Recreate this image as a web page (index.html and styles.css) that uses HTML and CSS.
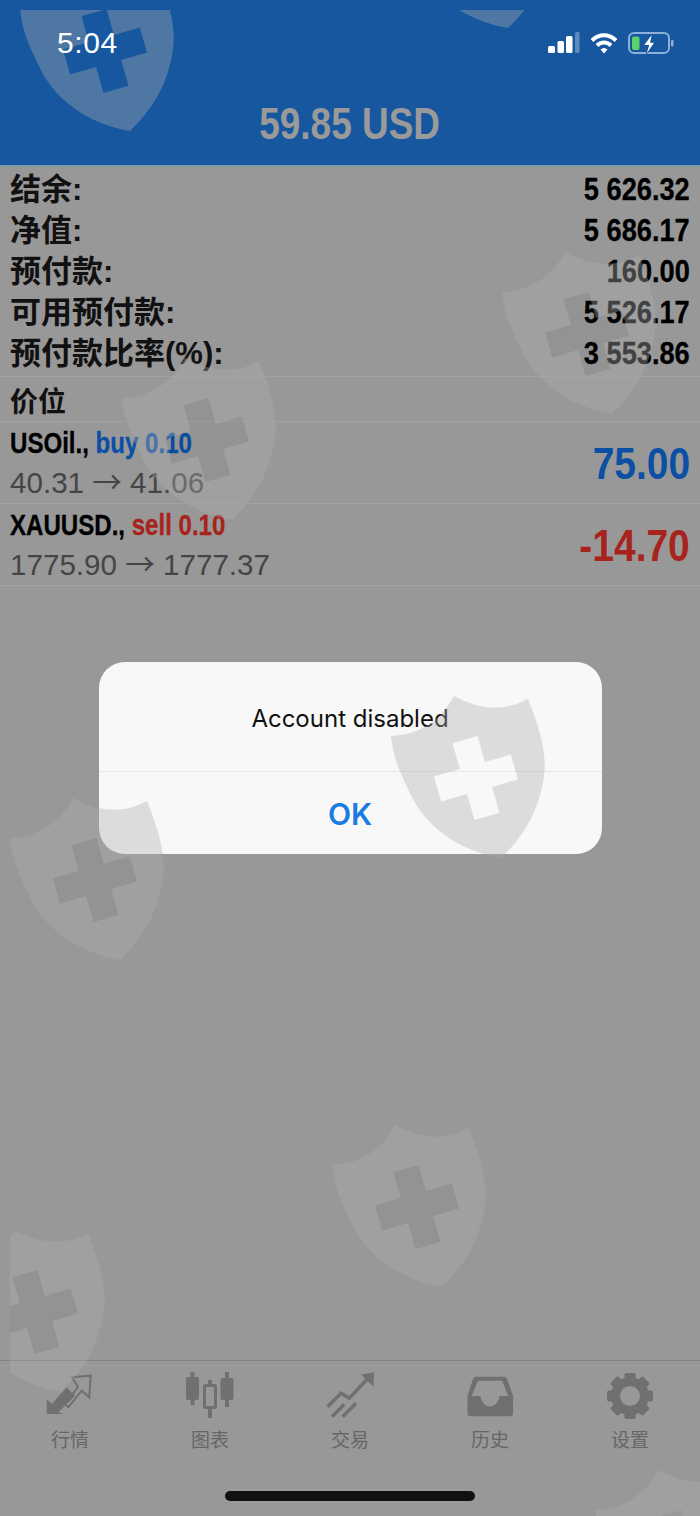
FILE: index.html
```html
<!DOCTYPE html>
<html lang="zh">
<head>
    <meta charset="UTF-8">
    <meta name="viewport" content="width=device-width, initial-scale=1.0">
    <title>Account disabled</title>
    <link rel="stylesheet" href="styles.css">
</head>
<body>
    <div class="phone">
        <header class="header">
            <div class="status">
                <span class="time">5:04</span>
                <div class="status-icons">
                    <svg class="ic-signal" width="32" height="22" viewBox="0 0 32 22">
                        <rect x="0" y="14" width="7" height="7" rx="1.5" fill="#fff"/>
                        <rect x="9.5" y="9" width="6.5" height="12" rx="1.5" fill="#fff"/>
                        <rect x="18" y="4" width="6.5" height="17" rx="1.5" fill="#fff"/>
                        <rect x="27" y="0" width="4.5" height="21" rx="1.5" fill="#fff" opacity=".3"/>
                    </svg>
                    <svg class="ic-wifi" width="28" height="22" viewBox="0 0 28 22">
                        <path d="M2 8.5C9 1.5 19 1.5 26 8.5" fill="none" stroke="#fff" stroke-width="4"/>
                        <path d="M7 13.5C11 9.5 17 9.5 21 13.5" fill="none" stroke="#fff" stroke-width="4"/>
                        <path d="M10.5 17.5Q14 14.5 17.5 17.5L14 21.5Z" fill="#fff"/>
                    </svg>
                    <svg class="ic-battery" width="46" height="22" viewBox="0 0 46 22">
                        <rect x="1" y="1" width="40" height="20" rx="5" fill="none" stroke="#8db0d8" stroke-width="2"/>
                        <rect x="4" y="4.5" width="7.5" height="13.5" rx="2" fill="#5ad56c"/>
                        <path d="M23.7 3 16.3 13H21.3L18.7 21.5 26 10.7H22Z" fill="#fff" stroke="#17579f" stroke-width="1.5" paint-order="stroke"/>
                        <rect x="43" y="8" width="2.5" height="6.5" rx="1" fill="#8db0d8"/>
                    </svg>
                </div>
            </div>
            <div class="balance"><span class="narrow">59.85 USD</span></div>
        </header>

        <main class="content">
            <section class="summary">
                <div class="sum-row"><span class="sum-label">结余:</span><span class="sum-value">5 626.32</span></div>
                <div class="sum-row"><span class="sum-label">净值:</span><span class="sum-value">5 686.17</span></div>
                <div class="sum-row"><span class="sum-label">预付款:</span><span class="sum-value">160.00</span></div>
                <div class="sum-row"><span class="sum-label">可用预付款:</span><span class="sum-value">5 526.17</span></div>
                <div class="sum-row"><span class="sum-label">预付款比率(%):</span><span class="sum-value">3 553.86</span></div>
            </section>
            <div class="section-title">价位</div>
            <div class="position">
                <div>
                    <div class="pos-name">USOil., <span class="buy">buy 0.10</span></div>
                    <div class="pos-price">40.31 <span class="arrow">→</span> 41.06</div>
                </div>
                <span class="pos-profit buy">75.00</span>
            </div>
            <div class="position">
                <div>
                    <div class="pos-name">XAUUSD., <span class="sell">sell 0.10</span></div>
                    <div class="pos-price">1775.90 <span class="arrow">→</span> 1777.37</div>
                </div>
                <span class="pos-profit sell">-14.70</span>
            </div>
        </main>

        <nav class="tabs">
            <div class="tab-list">
                <div class="tab">
                    <svg width="48" height="48" viewBox="0 0 48 48">
                        <path d="M26 5.3 44.7 3.7 43.3 25.3 35.7 18.7 22.3 35.3 19 32 32 15Z" fill="none" stroke="#707070" stroke-width="2"/>
                        <path d="M.7 42V27L5.7 32 20.7 15.3 29 23.7 12.3 40.3 17.3 42Z" fill="#707070"/>
                    </svg>
                    <span>行情</span>
                </div>
                <div class="tab">
                    <svg width="48" height="48" viewBox="0 0 48 48">
                        <path d="M6.5 0V33" stroke="#707070" stroke-width="4"/>
                        <rect x="0" y="5" width="13" height="23" rx="2" fill="#707070"/>
                        <path d="M24 8V46" stroke="#707070" stroke-width="4"/>
                        <rect x="18.5" y="13.5" width="11" height="22" rx="1" fill="#989898" stroke="#707070" stroke-width="3"/>
                        <path d="M41 0V35" stroke="#707070" stroke-width="4"/>
                        <rect x="34.5" y="6" width="13" height="22" rx="2" fill="#707070"/>
                    </svg>
                    <span>图表</span>
                </div>
                <div class="tab">
                    <svg width="48" height="48" viewBox="0 0 48 48">
                        <path d="M1.7 34.7 15 21.3 23.3 26.3 45 3" fill="none" stroke="#707070" stroke-width="3.5"/>
                        <path d="M36.7 3 47.3 1.3 46.7 13Z" fill="#707070" stroke="#707070" stroke-width="1.5"/>
                        <path d="M6 44.7 18.3 32.3M16.7 44.7 30 31.3" stroke="#707070" stroke-width="3.5"/>
                    </svg>
                    <span>交易</span>
                </div>
                <div class="tab">
                    <svg width="48" height="48" viewBox="0 0 50 48">
                        <path fill-rule="evenodd" fill="#707070" d="M10 4H40Q42 4 43 7L49 24V42Q49 45 46 45H4Q1.5 45 1.5 42V24L7 7Q8 4 10 4ZM12.5 8H37.5L44 24H35C34 30 30 35 25 35C20 35 16 30 15 24H6Z"/>
                    </svg>
                    <span>历史</span>
                </div>
                <div class="tab">
                    <svg width="48" height="48" viewBox="0 0 48 48">
                        <circle cx="24" cy="24" r="14.5" fill="none" stroke="#707070" stroke-width="9"/>
                        <g fill="#707070">
                            <rect x="18.5" y="1" width="11" height="9" rx="2"/>
                            <rect x="18.5" y="1" width="11" height="9" rx="2" transform="rotate(45 24 24)"/>
                            <rect x="18.5" y="1" width="11" height="9" rx="2" transform="rotate(90 24 24)"/>
                            <rect x="18.5" y="1" width="11" height="9" rx="2" transform="rotate(135 24 24)"/>
                            <rect x="18.5" y="1" width="11" height="9" rx="2" transform="rotate(180 24 24)"/>
                            <rect x="18.5" y="1" width="11" height="9" rx="2" transform="rotate(225 24 24)"/>
                            <rect x="18.5" y="1" width="11" height="9" rx="2" transform="rotate(270 24 24)"/>
                            <rect x="18.5" y="1" width="11" height="9" rx="2" transform="rotate(315 24 24)"/>
                        </g>
                    </svg>
                    <span>设置</span>
                </div>
            </div>
            <div class="home-bar"></div>
        </nav>

        <div class="overlay">
            <div class="dialog">
                <div class="dialog-text">Account disabled</div>
                <div class="dialog-btn">OK</div>
            </div>
        </div>

        <!-- watermark shields, they lie over everything -->
        <svg width="0" height="0" class="defs">
            <defs>
                <path id="shield" fill-rule="evenodd" d="M2 40Q45 38 65 0Q105 22 139 3C152 35 158 60 155 80C150 115 135 140 112 162C70 155 35 130 20 95C10 75 4 60 2 40ZM63.5 47.2 88.5 40 95.9 65.9 121.8 58.5 129 83.5 103.1 90.9 110.5 116.8 85.5 124 78.1 98.1 52.2 105.5 45 80.5 70.9 73.1Z"/>
                <path id="cross" d="M63.5 47.2 88.5 40 95.9 65.9 121.8 58.5 129 83.5 103.1 90.9 110.5 116.8 85.5 124 78.1 98.1 52.2 105.5 45 80.5 70.9 73.1Z"/>
            </defs>
        </svg>
        <div class="watermarks">
            <svg class="wm wm1" viewBox="0 0 156 165"><use href="#shield"/></svg>
            <svg class="wm wm2" viewBox="0 0 156 165"><use href="#shield"/></svg>
            <svg class="wm wm3" viewBox="0 0 156 165"><use href="#shield"/><use href="#cross" class="wm-cross"/></svg>
            <svg class="wm wm4" viewBox="0 0 156 165"><use href="#shield"/><use href="#cross" class="wm-cross"/></svg>
            <svg class="wm wm5" viewBox="0 0 156 165"><use href="#shield"/></svg>
            <svg class="wm wm6" viewBox="0 0 156 165"><use href="#shield"/><use href="#cross" class="wm-cross"/></svg>
            <svg class="wm wm7" viewBox="0 0 156 165"><use href="#shield"/><use href="#cross" class="wm-cross"/></svg>
            <svg class="wm wm8" viewBox="0 0 156 165"><use href="#shield"/><use href="#cross" class="wm-cross"/></svg>
            <svg class="wm wm9" viewBox="0 0 156 165"><use href="#shield"/></svg>
        </div>
    </div>
</body>
</html>
```

FILE: styles.css
```css
* {
    box-sizing: border-box;
}
body {
    margin: 0;
    background: #989898;
    font-family: "Liberation Sans", "Noto Sans CJK SC", sans-serif;
    overflow: hidden;
}
.phone {
    position: relative;
    width: 700px;
    height: 1516px;
    display: flex;
    flex-direction: column;
    overflow: hidden;
}

/* header */
.header {
    height: 165px;
    background: #17579f;
}
.status {
    position: relative;
    z-index: 3;
    height: 86px;
    padding: 0 26px 0 57px;
    display: flex;
    justify-content: space-between;
    align-items: center;
    color: white;
}
.time {
    font-size: 30px;
    letter-spacing: 0.6px;
}
.status-icons {
    display: flex;
    gap: 10px;
    align-items: center;
}
.balance {
    height: 76px;
    line-height: 76px;
    text-align: center;
    font-size: 44px;
    font-weight: bold;
    color: #9a9a9a;
}
.narrow {
    display: inline-block;
    transform: scaleX(0.84);
}

/* account list */
.content {
    flex: 1;
    border-top: 2px solid #7d9aa5;
    background: #989898;
}
.summary {
    padding-top: 2px;
    padding-bottom: 2px;
    border-bottom: 1px solid #a1a1a1;
}
.sum-row {
    height: 41px;
    line-height: 41px;
    padding: 0 10px;
    display: flex;
    justify-content: space-between;
}
.sum-label {
    font-size: 31px;
    font-weight: bold;
    color: #111;
}
.sum-value {
    font-size: 31px;
    font-weight: bold;
    color: #000;
    -webkit-text-stroke: 0.3px;
    transform: scaleX(0.877);
    transform-origin: right center;
}
.section-title {
    height: 45px;
    line-height: 51px;
    padding-left: 10px;
    font-size: 28px;
    font-weight: bold;
    color: #111;
    border-bottom: 1px solid #a1a1a1;
}
.position {
    height: 82px;
    padding: 0 10px;
    display: flex;
    justify-content: space-between;
    align-items: center;
    border-bottom: 1px solid #a1a1a1;
}
.pos-name {
    line-height: 38px;
    font-size: 29px;
    font-weight: bold;
    color: #000;
    white-space: nowrap;
    -webkit-text-stroke: 0.3px;
    transform: scaleX(0.83);
    transform-origin: left center;
}
.pos-price {
    line-height: 38px;
    font-size: 29.6px;
    color: #454545;
    white-space: nowrap;
}
.arrow {
    font-family: "Noto Sans CJK SC", sans-serif;
}
.buy {
    color: #0b50a5;
}
.sell {
    color: #a8231b;
}
.pos-profit {
    padding-top: 2px;
    font-size: 44px;
    font-weight: bold;
    transform: scaleX(0.885);
    transform-origin: right center;
}

/* bottom tabs */
.tabs {
    height: 156px;
    padding-top: 11px;
    border-top: 1px solid #828282;
    box-shadow: inset 0 4px 0 #989898, inset 0 5px 0 #a0a0a0;
    display: flex;
    flex-direction: column;
    align-items: center;
}
.tab-list {
    width: 100%;
    display: grid;
    grid-template-columns: repeat(5, 140px);
}
.tab {
    display: flex;
    flex-direction: column;
    align-items: center;
    gap: 9px;
    font-size: 19px;
    line-height: 24px;
    color: #666;
}
.home-bar {
    width: 250px;
    height: 10px;
    margin-top: 38px;
    border-radius: 5px;
    background: #111;
}

/* alert */
.overlay {
    position: absolute;
    inset: 0;
    z-index: 1;
    display: flex;
    justify-content: center;
    align-items: center;
}
.dialog {
    width: 503px;
    height: 192px;
    border-radius: 26px;
    background: #f8f8f8;
    text-align: center;
}
.dialog-text {
    height: 110px;
    padding-top: 40px;
    font-family: Inter, "Liberation Sans", sans-serif;
    font-size: 24px;
    line-height: 34px;
    color: #111;
    border-bottom: 1px solid #e8e8e8;
}
.dialog-btn {
    height: 82px;
    line-height: 84px;
    font-family: Inter, "Liberation Sans", sans-serif;
    font-size: 30px;
    font-weight: 600;
    color: #1a7be0;
}

/* watermark */
.defs {
    position: absolute;
}
.watermarks {
    position: absolute;
    top: 10px;
    left: 10px;
    right: 0;
    bottom: 0;
    z-index: 2;
    overflow: hidden;
    pointer-events: none;
}
.wm {
    position: absolute;
    width: 156px;
    height: 165px;
    fill: rgba(173, 173, 173, 0.375);
}
.wm-cross {
    fill: #000;
    fill-opacity: 0.03;
}
.wm1 { left: 8px; top: -41px; }
.wm2 { left: 386px; top: -144px; }
.wm3 { left: 490px; top: 242px; }
.wm4 { left: 110px; top: 348px; }
.wm5 { left: 379px; top: 686px; }
.wm6 { left: -2px; top: 788px; }
.wm7 { left: 320px; top: 1115px; }
.wm8 { left: -61px; top: 1220px; }
.wm9 { left: 583px; top: 1460px; }
```
